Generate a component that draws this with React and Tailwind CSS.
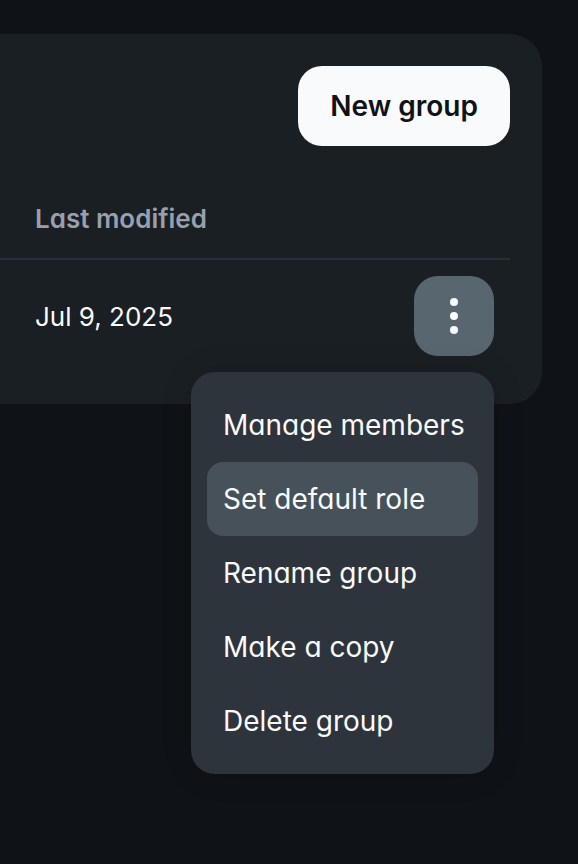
const menuItems = [
  { label: "Manage members" },
  { label: "Set default role", active: true },
  { label: "Rename group" },
  { label: "Make a copy" },
  { label: "Delete group" },
];

function DotsIcon() {
  return (
    <svg aria-hidden="true" className="h-10 w-10" viewBox="0 0 40 40" fill="currentColor">
      <circle cx="20" cy="6" r="4" />
      <circle cx="20" cy="20" r="4" />
      <circle cx="20" cy="34" r="4" />
    </svg>
  );
}

function RowMenu() {
  return (
    <div
      role="menu"
      className="absolute right-0 top-full z-10 mt-4 flex w-[303px] flex-col rounded-3xl bg-[#2e343c] p-4 shadow-[0_0_32px_rgba(0,0,0,0.12)]"
    >
      {menuItems.map((item) => (
        <button
          key={item.label}
          type="button"
          role="menuitem"
          className={`h-[74px] whitespace-nowrap rounded-2xl px-4 text-left text-[28px] font-normal text-[#f9fafc] ${
            item.active ? "bg-[#465159]" : ""
          }`}
        >
          {item.label}
        </button>
      ))}
    </div>
  );
}

export default function App() {
  return (
    <main className="min-h-screen bg-[#0f1216] pr-9 pt-[34px] font-['Inter',sans-serif] [font-feature-settings:'cv11']">
      <section className="rounded-r-[32px] bg-[#1a1f23] py-8 pr-8">
        <div className="flex justify-end">
          <button
            type="button"
            className="h-20 whitespace-nowrap rounded-3xl bg-[#f9fafc] px-8 text-[28px] font-semibold text-[#0f1216]"
          >
            New group
          </button>
        </div>
        <table className="mt-8 w-full border-separate border-spacing-0 text-left text-[26px]">
          <thead>
            <tr className="h-[82px]">
              <th scope="col" className="border-b-2 border-[#2a2e36] pl-[35px] font-semibold text-[#9a9fae]">
                Last modified
              </th>
              <td className="border-b-2 border-[#2a2e36]" />
            </tr>
          </thead>
          <tbody>
            <tr>
              <td className="pl-[35px] text-[#f9fafc]">Jul 9, 2025</td>
              <td className="py-4 pr-4">
                <div className="relative ml-auto w-20">
                  <button
                    type="button"
                    aria-label="Group actions"
                    aria-haspopup="menu"
                    aria-expanded="true"
                    className="flex h-20 w-20 items-center justify-center rounded-3xl bg-[#58666f] text-[#f9fafc]"
                  >
                    <DotsIcon />
                  </button>
                  <RowMenu />
                </div>
              </td>
            </tr>
          </tbody>
        </table>
      </section>
    </main>
  );
}
